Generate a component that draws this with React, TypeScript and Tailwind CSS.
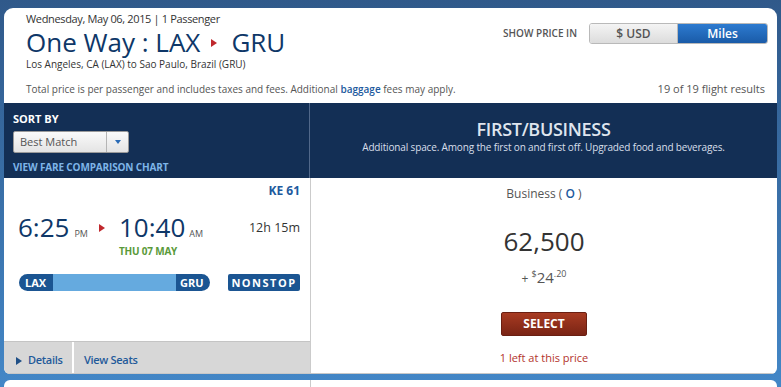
import React from "react";

const F = { fontFamily: '"Open Sans", "Liberation Sans", sans-serif' };

function Tri({ className }: { className?: string }) {
  return (
    <svg width="6" height="8" viewBox="0 0 6 8" className={className}>
      <path d="M0 0 L6 4 L0 8 Z" fill="currentColor" />
    </svg>
  );
}

export default function App() {
  return (
    <div
      style={F}
      className="w-[781px] h-[387px] overflow-hidden bg-gradient-to-b from-[#30598a] to-[#4387c7] pt-[8px] px-[4px]"
    >
      <div className="bg-white rounded-t-[9px] rounded-b-[6px] overflow-hidden">
        {/* Header */}
        <div className="h-[95px] pl-[22px] pr-[9px] flex flex-col">
          <div className="flex justify-between items-start">
            <div className="flex flex-col">
              <div className="mt-[4px] text-[11px] leading-[14px] tracking-[-0.35px] text-[#333]">
                Wednesday, May 06, 2015 | 1 Passenger
              </div>
              <div className="mt-[1px] text-[26px] leading-[30px] text-[#0e3768] flex items-center">
                <span>One Way : LAX</span>
                <Tri className="text-[#c0282d] ml-[11px] mr-[14px] mt-[2px]" />
                <span>GRU</span>
              </div>
              <div className="text-[10px] leading-[14px] text-[#333]">
                Los Angeles, CA (LAX) to Sao Paulo, Brazil (GRU)
              </div>
            </div>
            <div className="flex items-center mt-[15px]">
              <span className="text-[10px] font-semibold text-[#555] mr-[12px]">SHOW PRICE IN</span>
              <div className="flex h-[21px] rounded-[3px] overflow-hidden border border-[#b9b9b9]">
                <div className="w-[88px] flex items-center justify-center text-[12px] font-semibold text-[#555] bg-gradient-to-b from-[#f4f4f4] to-[#dcdcdc] border-r border-[#b9b9b9]">
                  $ USD
                </div>
                <div className="w-[89px] flex items-center justify-center text-[12px] font-semibold text-white bg-gradient-to-b from-[#2d7bd0] to-[#1a5ba8]">
                  Miles
                </div>
              </div>
            </div>
          </div>
          <div className="mt-auto mb-[7px] flex justify-between items-end leading-[14px] text-[#555]">
            <span className="text-[10px]">
              Total price is per passenger and includes taxes and fees. Additional{" "}
              <span className="text-[#1d5a9e] font-semibold">baggage</span> fees may apply.
            </span>
            <span className="pr-[3px] text-[11px]">19 of 19 flight results</span>
          </div>
        </div>

        {/* Navy band */}
        <div className="h-[75px] bg-[#132f55] flex">
          <div className="w-[306px] border-r border-[#51688a] pl-[9px] flex flex-col">
            <div className="mt-[9px] text-[11px] leading-[14px] font-bold text-white">SORT BY</div>
            <div className="mt-[5px] w-[116px] h-[22px] rounded-[2px] border border-[#9a9a9a] bg-gradient-to-b from-[#fafafa] to-[#e4e4e4] flex">
              <div className="w-[93px] border-r border-[#b5b5b5] text-[11px] leading-[20px] pl-[6px] text-[#555]">
                Best Match
              </div>
              <div className="flex-1 flex items-center justify-center">
                <svg width="6" height="4" viewBox="0 0 6 4">
                  <path d="M0 0 L6 0 L3 4 Z" fill="#2a6bb6" />
                </svg>
              </div>
            </div>
            <div className="mt-[7px] text-[10px] leading-[14px] font-bold tracking-[-0.15px] text-[#7eb5e8]">
              VIEW FARE COMPARISON CHART
            </div>
          </div>
          <div className="flex-1 flex flex-col items-center">
            <div className="mt-[15px] text-[18px] leading-[22px] font-semibold tracking-[-0.3px] text-[#dfe5ee]">FIRST/BUSINESS</div>
            <div className="text-[10px] leading-[14px] tracking-[-0.15px] text-[#d8dfea]">
              Additional space. Among the first on and first off. Upgraded food and beverages.
            </div>
          </div>
        </div>

        {/* Flight row */}
        <div className="flex h-[196px] border-b border-[#c8c8c8]">
          <div className="w-[307px] border-r border-[#cbcbcb] flex flex-col">
            <div className="flex-1 pl-[14px] pr-[10px] flex flex-col">
              <div className="mt-[6px] self-end text-[12px] leading-[14px] font-bold text-[#1d5a9e]">KE 61</div>
              <div className="mt-[14px] flex items-start">
                <div className="flex items-baseline text-[#0e3768]">
                  <span className="text-[26px] leading-[30px]">6:25</span>
                  <span className="ml-[5px] text-[9px] text-[#555]">PM</span>
                </div>
                <Tri className="text-[#c0282d] ml-[11px] mr-[14px] mt-[12px]" />
                <div className="flex flex-col">
                  <div className="flex items-baseline text-[#0e3768]">
                    <span className="text-[26px] leading-[30px]">10:40</span>
                    <span className="ml-[4px] text-[9px] text-[#555]">AM</span>
                  </div>
                  <div className="mt-[3px] text-[10px] leading-[12px] font-bold tracking-[-0.2px] text-[#5a9a3a]">THU 07 MAY</div>
                </div>
                <div className="ml-auto mt-[8px] text-[12.5px] leading-[16px] text-[#333]">12h 15m</div>
              </div>
              <div className="mt-[17px] flex items-center">
                <div className="ml-[1px] w-[191px] h-[17px] rounded-full overflow-hidden flex text-[11px] font-bold text-white leading-[17px]">
                  <div className="w-[34px] bg-[#1b5592] pl-[6px]">LAX</div>
                  <div className="flex-1 bg-[#65aadf]" />
                  <div className="w-[34px] bg-[#1b5592] pl-[4px]">GRU</div>
                </div>
                <div className="ml-[18px] w-[72px] h-[17px] rounded-[2px] bg-[#1b5592] text-white text-[11px] font-bold tracking-[1.5px] leading-[17px] text-center">
                  NONSTOP
                </div>
              </div>
            </div>
            <div className="h-[32px] bg-[#d7d7d7] border-t border-[#c4c4c4] flex items-stretch text-[11px] font-semibold tracking-[-0.3px] text-[#1f5a9a]">
              <div className="w-[70px] flex items-center pl-[12px] pt-[6px] border-r-2 border-white">
                <Tri className="mr-[6px] text-[#1f4f86]" />
                Details
              </div>
              <div className="pl-[10px] pt-[6px] flex items-center">View Seats</div>
            </div>
          </div>
          <div className="flex-1 flex flex-col items-center">
            <div className="mt-[8px] text-[12px] leading-[16px] text-[#555]">
              Business ( <span className="text-[#1d5a9e] font-semibold">O</span> )
            </div>
            <div className="mt-[24px] text-[26px] leading-[30px] text-[#333]">62,500</div>
            <div className="mt-[12px] h-[18px] text-[#555] flex items-baseline">
              <span className="text-[12px] leading-[18px]">+&nbsp;</span>
              <span className="text-[9px] leading-[10px] relative -top-[6px]">$</span>
              <span className="text-[15px] leading-[18px]">24</span>
              <span className="text-[9px] leading-[10px] relative -top-[6px]">.20</span>
            </div>
            <div className="mt-[26px] w-[86px] h-[24px] rounded-[2px] bg-gradient-to-b from-[#a83b22] to-[#7a2415] border border-[#6a1f12] text-white text-[12px] font-bold flex items-center justify-center">
              SELECT
            </div>
            <div className="mt-[15px] text-[11px] leading-[14px] text-[#b3332b]">1 left at this price</div>
          </div>
        </div>
      </div>

      {/* Next card */}
      <div className="mt-[6px] h-[20px] bg-white rounded-t-[6px] flex">
        <div className="w-[307px] border-r border-[#cbcbcb]" />
      </div>
    </div>
  );
}
